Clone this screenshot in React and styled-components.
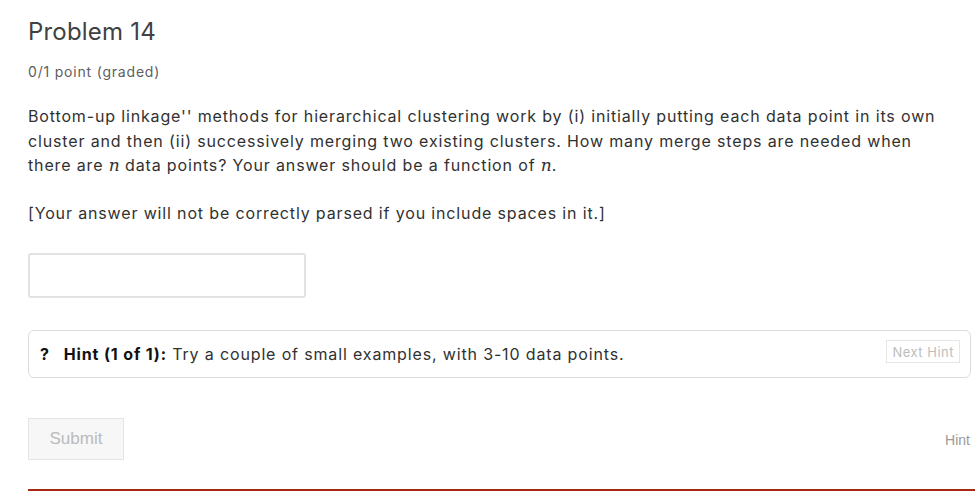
import React from "react";
import styled, { createGlobalStyle } from "styled-components";

const Global = createGlobalStyle`
  html, body { margin: 0; padding: 0; background: #fff; }
  body { font-family: Inter, "Open Sans", sans-serif; color: #313131; }
`;

const Page = styled.div`
  padding: 16px 4px 0 28px;
  display: flex;
  flex-direction: column;
`;

const Title = styled.h3`
  margin: 0;
  font-size: 24px;
  font-weight: 400;
  line-height: 32px;
  letter-spacing: 0.2px;
  color: #414141;
`;

const Points = styled.div`
  margin-top: 14px;
  font-size: 14px;
  line-height: 20px;
  letter-spacing: 0.8px;
  color: #5e5e5e;
`;

const Prompt = styled.p`
  margin: ${(p) => (p.$first ? "22px" : "23px")} 0 0;
  max-width: 920px;
  font-size: 16px;
  line-height: 24.5px;
  letter-spacing: 0.85px;
  color: #313131;
`;

const MathVar = styled.span`
  font-family: "DejaVu Serif", "Liberation Serif", serif;
  font-style: italic;
  font-size: 17px;
  line-height: 1;
  letter-spacing: 0;
`;

const Answer = styled.input`
  margin-top: 28px;
  box-sizing: border-box;
  width: 278px;
  height: 45px;
  border: 2px solid #e2e2e2;
  border-radius: 3px;
  background: #fff;
  outline: none;
`;

const HintBox = styled.div`
  margin-top: 32px;
  box-sizing: border-box;
  height: 48px;
  border: 1px solid #dcdcdc;
  border-radius: 6px;
  display: flex;
  align-items: center;
  padding: 0 10px 0 11px;
  font-size: 16px;
  letter-spacing: 0.85px;
  color: #313131;
`;

const HintText = styled.div`
  flex: 1;
  padding-bottom: 1px;
`;

const Q = styled.strong`
  color: #111;
  margin-right: 14px;
`;

const Label = styled.strong`
  color: #111;
`;

const NextHint = styled.button`
  align-self: flex-start;
  margin-top: 9px;
  height: 23px;
  padding: 0 5px;
  border: 1px solid #e6e6e6;
  background: #fff;
  border-radius: 0;
  font-family: Inter, sans-serif;
  font-size: 13px;
  letter-spacing: 0.5px;
  color: #bdbdbd;
`;

const Actions = styled.div`
  margin-top: 40px;
  display: flex;
  justify-content: space-between;
  align-items: center;
`;

const Submit = styled.button`
  box-sizing: border-box;
  width: 96px;
  height: 42px;
  background: #f7f7f7;
  border: 1px solid #e4e4e4;
  border-radius: 0;
  font-family: "Liberation Sans", Arial, sans-serif;
  font-size: 17px;
  color: #bbbbbb;
`;

const HintLink = styled.span`
  font-family: "Liberation Sans", Arial, sans-serif;
  font-size: 14px;
  color: #9a9a9a;
  margin-right: 1px;
  margin-top: 2px;
`;

const Rule = styled.hr`
  margin: 29px -4px 0 0;
  border: 0;
  border-top: 2px solid #a52a10;
`;

export default function App() {
  return (
    <>
      <Global />
      <Page>
        <Title>Problem 14</Title>
        <Points>0/1 point (graded)</Points>
        <Prompt $first>
          Bottom-up linkage'' methods for hierarchical clustering work by (i) initially putting each data
          point in its own cluster and then (ii) successively merging two existing clusters. How many merge
          steps are needed when there are <MathVar>n</MathVar> data points? Your answer should be a function
          of <MathVar>n</MathVar>.
        </Prompt>
        <Prompt>[Your answer will not be correctly parsed if you include spaces in it.]</Prompt>
        <Answer type="text" aria-label="answer" />
        <HintBox>
          <HintText>
            <Q>?</Q>
            <Label>Hint (1 of 1):</Label> Try a couple of small examples, with 3-10 data points.
          </HintText>
          <NextHint>Next Hint</NextHint>
        </HintBox>
        <Actions>
          <Submit>Submit</Submit>
          <HintLink>Hint</HintLink>
        </Actions>
        <Rule />
      </Page>
    </>
  );
}
